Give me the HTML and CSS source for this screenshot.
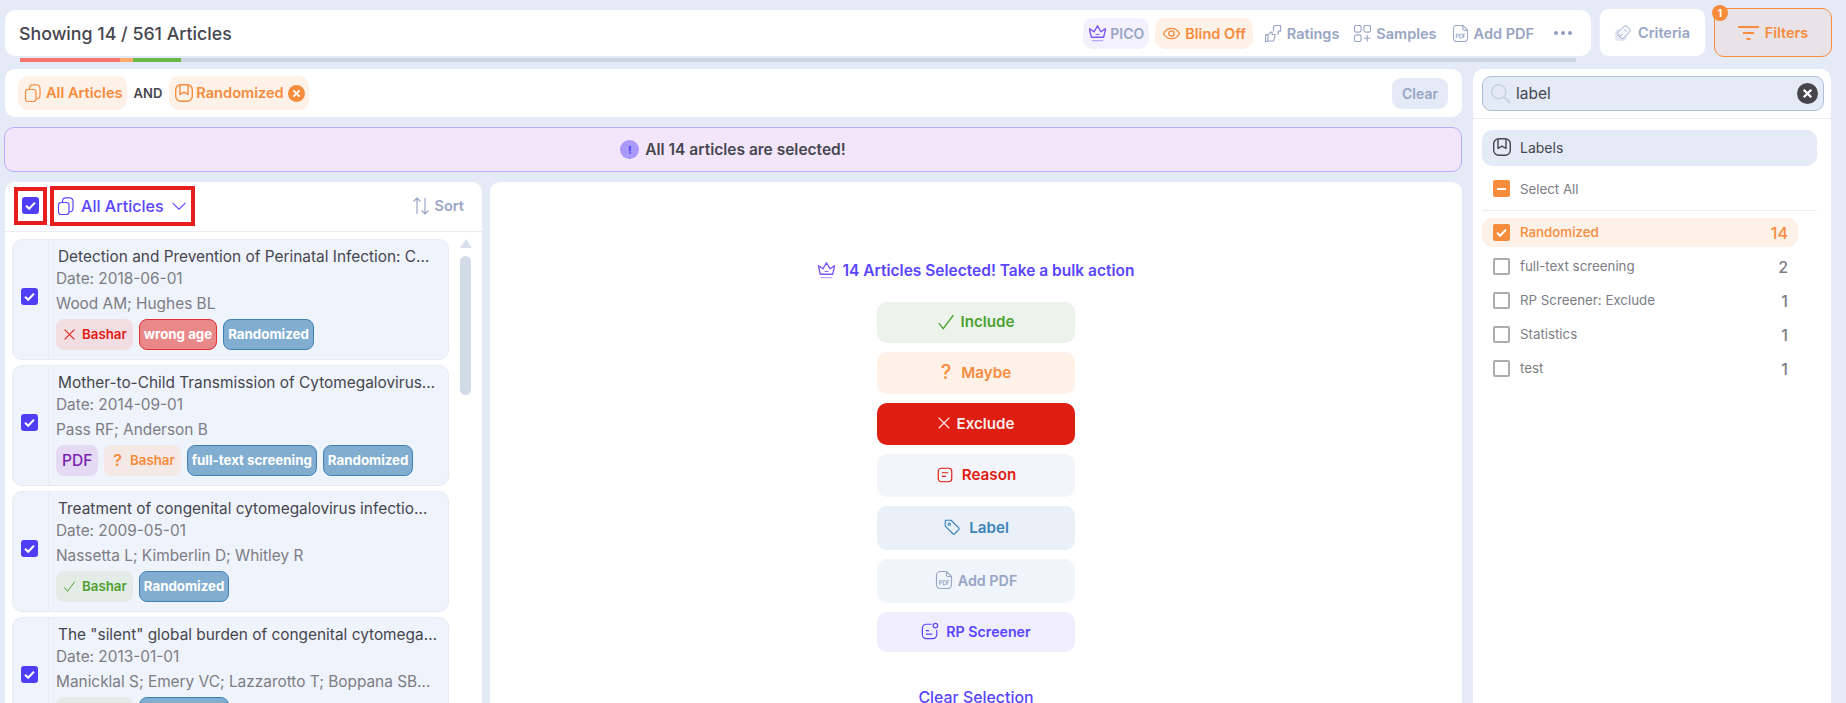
FILE: index.html
```html
<!DOCTYPE html>
<html lang="en">
<head>
<meta charset="utf-8">
<title>Articles</title>
<link rel="stylesheet" href="styles.css">
</head>
<body>
<svg class="defs" width="0" height="0" aria-hidden="true">
  <symbol id="i-copy" viewBox="0 0 20 20"><path d="M5 6.500h5.500A2.500 2.500 0 0 1 13 9v7a2.500 2.500 0 0 1-2.500 2.500H5A2.500 2.500 0 0 1 2.500 16V9A2.500 2.500 0 0 1 5 6.500Z" fill="none" stroke="currentColor" stroke-width="1.200"/><path d="M6.500 6.300V5a3 3 0 0 1 3-3.200h3.500A3.500 3.500 0 0 1 17 5v7.500a3.500 3.500 0 0 1-3.800 3.500" fill="none" stroke="currentColor" stroke-width="1.200"/></symbol>
  <symbol id="i-label" viewBox="0 0 20 20"><rect x="1.700" y="1.700" width="16.600" height="16.600" rx="5" fill="none" stroke="currentColor" stroke-width="1.400"/><path d="M6 2v9.500l4-2.300 4 2.300V2" fill="none" stroke="currentColor" stroke-width="1.400" stroke-linejoin="round"/></symbol>
  <symbol id="i-crown" viewBox="1 1 18 18"><path d="M3.500 14 1.300 4.800l5 3.400L10 1.800l3.700 6.400 5-3.400L16.500 14Z" fill="none" stroke="currentColor" stroke-width="1.400" stroke-linejoin="round"/><path d="M8 11h4" stroke="currentColor" stroke-width="1"/><path d="M4 17.500h12" stroke="#b9a7ff" stroke-width="1.300"/></symbol>
  <symbol id="i-eye" viewBox="1 1 18 18"><path d="M1.500 10C3.500 6.300 6.500 4.500 10 4.500s6.500 1.800 8.500 5.500c-2 3.700-5 5.500-8.500 5.500S3.500 13.700 1.500 10Z" fill="none" stroke="currentColor" stroke-width="1.400"/><circle cx="10" cy="10" r="2.800" fill="none" stroke="currentColor" stroke-width="1.400"/></symbol>
  <symbol id="i-thumbs" viewBox="1 1 18 18"><path d="M1.500 11.500h2.500v7H1.500ZM4 12l3-3.500h1.500v2.500h3v2l-1.500 5H4" fill="none" stroke="currentColor" stroke-width="1.200" stroke-linejoin="round"/><path d="M10 7.500V3l2-1.500h5.500v6H15v3h-1.500" fill="none" stroke="currentColor" stroke-width="1.200" stroke-linejoin="round"/></symbol>
  <symbol id="i-samples" viewBox="1 1 18 18"><rect x="1.500" y="1.500" width="7" height="7" rx="2" fill="none" stroke="currentColor" stroke-width="1.200"/><rect x="11.500" y="1.500" width="7" height="7" rx="2" fill="none" stroke="currentColor" stroke-width="1.200"/><rect x="1.500" y="11.500" width="7" height="7" rx="2" fill="none" stroke="currentColor" stroke-width="1.200"/><path d="M15 11.500v7M11.500 15h7" stroke="currentColor" stroke-width="1.200"/></symbol>
  <symbol id="i-pdf" viewBox="1 1 18 18"><path d="M6 1.500h6.500l5 5V15a3.500 3.500 0 0 1-3.500 3.500H6A3.500 3.500 0 0 1 2.500 15V5A3.500 3.500 0 0 1 6 1.500Z" fill="none" stroke="currentColor" stroke-width="1.100"/><path d="M12.500 1.500V5A1.500 1.500 0 0 0 14 6.500h3.500" fill="none" stroke="currentColor" stroke-width="1.100"/><path d="M5.500 15v-4.500H7a1 1 0 0 1 0 2.300H5.500M9.200 10.500V15h.8a2 2 0 0 0 0-4.500ZM13 15v-4.500h2.200M13 12.700h1.800" fill="none" stroke="currentColor" stroke-width=".9"/></symbol>
  <symbol id="i-criteria" viewBox="0 0 20 20"><rect x="1" y="7" width="12" height="12" rx="2.500" fill="#e5ebf6" stroke="#d5dbea" stroke-width="1"/><path d="M11 2.500a2 2 0 0 1 2.800 0l3.700 3.700a2 2 0 0 1 0 2.800l-7.500 7.500a2 2 0 0 1-2.800 0l-3.700-3.700a2 2 0 0 1 0-2.800Z" fill="#f6f8fc" stroke="currentColor" stroke-width="1.100"/><path d="M5 12.500l1.800 1.700 2.500-3M11 6l3 3" fill="none" stroke="currentColor" stroke-width="1"/></symbol>
  <symbol id="i-filter" viewBox="0 0 21 20"><path d="M0 4h21M5 10h11M8.500 16h4" stroke="currentColor" stroke-width="2.200" fill="none"/></symbol>
  <symbol id="i-sort" viewBox="0 0 20 20"><path d="M6 18V2M2.500 5.500 6 2l3.500 3.500M14 2v16M10.500 14.500 14 18l3.500-3.500" fill="none" stroke="currentColor" stroke-width="1.200"/></symbol>
  <symbol id="i-chev" viewBox="0 0 20 20"><path d="M2 6l8 8 8-8" fill="none" stroke="currentColor" stroke-width="1.300"/></symbol>
  <symbol id="i-x" viewBox="0 0 16 16"><path d="M2 2l12 12M14 2 2 14" fill="none" stroke="currentColor" stroke-width="1.300"/></symbol>
  <symbol id="i-xb" viewBox="0 0 16 16"><path d="M2.500 2.500l11 11M13.500 2.500l-11 11" fill="none" stroke="currentColor" stroke-width="3.400"/></symbol>
  <symbol id="i-ok" viewBox="0 0 16 16"><path d="M1.500 9 5.500 14 14.500 2" fill="none" stroke="currentColor" stroke-width="1.200"/></symbol>
  <symbol id="i-check" viewBox="0 0 16 16"><path d="M3.800 8.200 6.800 11l5.400-5.700" fill="none" stroke="#fff" stroke-width="2"/></symbol>
  <symbol id="i-reason" viewBox="0 0 20 20"><rect x="2.500" y="2.500" width="15" height="15" rx="3.500" fill="none" stroke="currentColor" stroke-width="1.300"/><path d="M6.500 7.500h7M6.500 11.500h4.500" stroke="currentColor" stroke-width="1.300"/></symbol>
  <symbol id="i-tag" viewBox="0 0 20 20"><path d="M3 2.500h6l8.500 8.500a1.500 1.500 0 0 1 0 2L13 17.500a1.500 1.500 0 0 1-2 0L2.500 9V3Z" fill="none" stroke="currentColor" stroke-width="1.300" stroke-linejoin="round"/><circle cx="7" cy="7" r="1.300" fill="none" stroke="currentColor" stroke-width="1.200"/></symbol>
  <symbol id="i-bot" viewBox="0 0 20 20"><path d="M12 2.500H6A4.500 4.500 0 0 0 1.500 7v7A4.500 4.500 0 0 0 6 18.500h7a4.500 4.500 0 0 0 4.500-4.500V9" fill="none" stroke="currentColor" stroke-width="1.300"/><circle cx="16" cy="4" r="2.500" fill="none" stroke="currentColor" stroke-width="1.300"/><path d="M5.500 9.500H9M5.500 13.500h7" stroke="currentColor" stroke-width="1.300"/></symbol>
  <symbol id="i-search" viewBox="0 0 24 24"><circle cx="10" cy="10" r="8" fill="none" stroke="currentColor" stroke-width="1.800"/><path d="M16 16l7 7" stroke="currentColor" stroke-width="2.200"/></symbol>
</svg>

<div class="app">
  <header class="top">
    <div class="top-main">
      <div class="bar">
        <h1 class="bar-title">Showing 14 / 561 Articles</h1>
        <nav class="bar-actions">
          <span class="act act-pico"><svg class="ic ic-crown"><use href="#i-crown"/></svg>PICO</span>
          <span class="act act-blind"><svg class="ic"><use href="#i-eye"/></svg>Blind Off</span>
          <span class="act act-plain"><svg class="ic"><use href="#i-thumbs"/></svg>Ratings</span>
          <span class="act act-plain"><svg class="ic"><use href="#i-samples"/></svg>Samples</span>
          <span class="act act-plain"><svg class="ic"><use href="#i-pdf"/></svg>Add PDF</span>
          <span class="dots"><i></i><i></i><i></i></span>
        </nav>
      </div>
      <div class="progress"><span class="p-red"></span><span class="p-orange"></span><span class="p-green"></span></div>
    </div>
    <button class="top-btn"><svg class="ic"><use href="#i-criteria"/></svg>Criteria</button>
    <button class="top-btn top-filters"><svg class="ic-filter"><use href="#i-filter"/></svg>Filters<span class="badge">1</span></button>
  </header>

  <div class="main">
    <div class="main-left">
      <div class="filter-row">
        <span class="f-chip f-chip-all"><svg class="ic"><use href="#i-copy"/></svg>All Articles</span>
        <span class="and">AND</span>
        <span class="f-chip f-chip-label"><svg class="ic"><use href="#i-label"/></svg>Randomized<span class="f-x"><svg class="xs"><use href="#i-xb"/></svg></span></span>
        <button class="clear">Clear</button>
      </div>

      <div class="banner"><span class="banner-ic">!</span>All 14 articles are selected!</div>

      <div class="panels">
        <section class="list">
          <div class="list-head">
            <span class="mark mark-box"><span class="cb"><svg><use href="#i-check"/></svg></span></span>
            <span class="mark mark-view"><svg class="ic"><use href="#i-copy"/></svg>All Articles<svg class="ic-chev"><use href="#i-chev"/></svg></span>
            <span class="sort"><svg class="ic"><use href="#i-sort"/></svg>Sort</span>
          </div>
          <div class="list-body">
            <div class="cards">
              <article class="card">
                <div class="card-check"><span class="cb"><svg><use href="#i-check"/></svg></span></div>
                <div class="card-body">
                  <h2 class="card-title">Detection and Prevention of Perinatal Infection: C…</h2>
                  <p class="card-line">Date: 2018-06-01</p>
                  <p class="card-line card-auth">Wood AM; Hughes BL</p>
                  <div class="chips">
                    <span class="chip c-ex"><svg class="cic"><use href="#i-x"/></svg>Bashar</span>
                    <span class="chip c-red">wrong age</span>
                    <span class="chip c-blue">Randomized</span>
                  </div>
                </div>
              </article>
              <article class="card">
                <div class="card-check"><span class="cb"><svg><use href="#i-check"/></svg></span></div>
                <div class="card-body">
                  <h2 class="card-title">Mother-to-Child Transmission of Cytomegalovirus…</h2>
                  <p class="card-line">Date: 2014-09-01</p>
                  <p class="card-line card-auth">Pass RF; Anderson B</p>
                  <div class="chips">
                    <span class="chip c-pdf">PDF</span>
                    <span class="chip c-maybe"><span class="q">?</span>Bashar</span>
                    <span class="chip c-blue">full-text screening</span>
                    <span class="chip c-blue">Randomized</span>
                  </div>
                </div>
              </article>
              <article class="card">
                <div class="card-check"><span class="cb"><svg><use href="#i-check"/></svg></span></div>
                <div class="card-body">
                  <h2 class="card-title">Treatment of congenital cytomegalovirus infectio…</h2>
                  <p class="card-line">Date: 2009-05-01</p>
                  <p class="card-line card-auth">Nassetta L; Kimberlin D; Whitley R</p>
                  <div class="chips">
                    <span class="chip c-inc"><svg class="cic"><use href="#i-ok"/></svg>Bashar</span>
                    <span class="chip c-blue">Randomized</span>
                  </div>
                </div>
              </article>
              <article class="card">
                <div class="card-check"><span class="cb"><svg><use href="#i-check"/></svg></span></div>
                <div class="card-body">
                  <h2 class="card-title">The "silent" global burden of congenital cytomega…</h2>
                  <p class="card-line">Date: 2013-01-01</p>
                  <p class="card-line card-auth">Manicklal S; Emery VC; Lazzarotto T; Boppana SB…</p>
                  <div class="chips">
                    <span class="chip c-inc"><svg class="cic"><use href="#i-ok"/></svg>Bashar</span>
                    <span class="chip c-blue">Randomized</span>
                  </div>
                </div>
              </article>
            </div>
            <div class="scroll"><span class="scroll-up"></span><span class="scroll-thumb"></span></div>
          </div>
        </section>

        <section class="bulk">
          <h2 class="bulk-title"><svg class="ic ic-crown"><use href="#i-crown"/></svg>14 Articles Selected! Take a bulk action</h2>
          <div class="bulk-btns">
            <button class="btn b-inc"><svg class="bic"><use href="#i-ok"/></svg>Include</button>
            <button class="btn b-maybe"><span class="bq">?</span>Maybe</button>
            <button class="btn b-ex"><svg class="bic"><use href="#i-x"/></svg>Exclude</button>
            <button class="btn b-reason"><svg class="bic"><use href="#i-reason"/></svg>Reason</button>
            <button class="btn b-label"><svg class="bic"><use href="#i-tag"/></svg>Label</button>
            <button class="btn b-pdf"><svg class="bic"><use href="#i-pdf"/></svg>Add PDF</button>
            <button class="btn b-rp"><svg class="bic"><use href="#i-bot"/></svg>RP Screener</button>
          </div>
          <a class="clear-sel">Clear Selection</a>
        </section>
      </div>
    </div>

    <aside class="side">
      <div class="side-search">
        <div class="search"><svg class="search-ic"><use href="#i-search"/></svg><span class="search-text">label</span><span class="search-x"><svg class="xs"><use href="#i-xb"/></svg></span></div>
      </div>
      <div class="side-body">
        <div class="labels-head"><svg class="ic"><use href="#i-label"/></svg>Labels</div>
        <div class="row row-all"><span class="cbx cbx-on"><i class="minus"></i></span><span class="row-name">Select All</span></div>
        <div class="rows">
          <div class="row row-on"><span class="cbx cbx-on"><svg><use href="#i-check"/></svg></span><span class="row-name">Randomized</span><span class="row-n">14</span></div>
          <div class="row"><span class="cbx"></span><span class="row-name">full-text screening</span><span class="row-n">2</span></div>
          <div class="row"><span class="cbx"></span><span class="row-name">RP Screener: Exclude</span><span class="row-n">1</span></div>
          <div class="row"><span class="cbx"></span><span class="row-name">Statistics</span><span class="row-n">1</span></div>
          <div class="row"><span class="cbx"></span><span class="row-name">test</span><span class="row-n">1</span></div>
        </div>
      </div>
    </aside>
  </div>
</div>
</body>
</html>
```

FILE: styles.css
```css
* { box-sizing: border-box; }
html, body { margin: 0; height: 703px; overflow: hidden; }
body { background: #e5ebf6; font-family: Inter, "Liberation Sans", sans-serif; color: #46464f; }
.defs { position: absolute; }
h1, h2, p { margin: 0; }
button { font-family: inherit; border: 0; cursor: pointer; }
.ic { width: 20px; height: 20px; flex: none; }

.app { height: 703px; padding: 8px 14px 0 5px; display: flex; flex-direction: column; }

/* top */
.top { display: flex; align-items: flex-start; gap: 8px; height: 61px; flex: none; }
.top-main { width: 1586px; padding-top: 2px; }
.bar { height: 46px; background: #fff; border-radius: 10px; display: flex; align-items: center; justify-content: space-between; padding: 0 19px 0 14px; }
.bar-title { font-size: 17.800px; font-weight: 500; color: #46464f; }
.bar-actions { display: flex; align-items: center; }
.act { display: flex; align-items: center; gap: 5px; height: 31px; border-radius: 10px; font-size: 14.500px; font-weight: 600; color: #98a5c4; white-space: nowrap; }
.act .ic { width: 17px; height: 17px; }
.act-plain { margin-left: 15px; }
.act-pico { background: #f3f1fe; padding: 0 5px 0 6px; gap: 4px; font-size: 14px; }
.act-pico .ic-crown { color: #7a55f5; }
.act-blind { background: #fdf1e8; color: #f68c3c; padding: 0 7px 0 8px; margin: 0 -3px 0 6px; }
.dots { display: flex; gap: 3px; margin-left: 20px; }
.dots i { width: 4px; height: 4px; border-radius: 50%; background: #8f9dbd; }
.progress { display: flex; height: 4px; margin: 2px 15px 0; background: #cdd5e3; }
.p-red { width: 100px; background: #f8736b; }
.p-orange { width: 13px; background: #fbab6b; }
.p-green { width: 48px; background: #69b84a; }
.top-btn { height: 49px; border-radius: 10px; background: #fff; display: flex; align-items: center; justify-content: center; gap: 6px; font-size: 14.500px; font-weight: 600; color: #98a5c4; width: 107px; border: 1px solid #e9edf6; position: relative; }
.top-btn .ic { width: 17px; height: 17px; }
.ic-filter { width: 21px; height: 20px; flex: none; }
.top-filters { width: 118px; background: #e9e3e8; border: 1px solid #f68c3c; color: #f68c3c; gap: 6px; }
.badge { position: absolute; left: -3px; top: -4px; width: 16px; height: 16px; border-radius: 50%; background: #f68c3c; color: #fff; font-size: 10px; font-weight: 700; display: flex; align-items: center; justify-content: center; }

/* main */
.main { flex: 1; min-height: 0; display: flex; gap: 11px; }
.main-left { width: 1457px; display: flex; flex-direction: column; min-height: 0; }
.filter-row { height: 48px; flex: none; background: #fff; border-radius: 10px; display: flex; align-items: center; padding: 0 14px 0 13px; }
.f-chip { height: 34px; display: flex; align-items: center; padding: 0 5px; background: #fdf1e8; border-radius: 10px; color: #f68c3c; font-size: 14.600px; font-weight: 600; gap: 3px; }
.f-chip-all { padding-right: 4px; }
.f-chip-label { gap: 2px; padding-right: 4px; }
.and { font-size: 13px; font-weight: 600; margin: 0 7px; color: #46464f; }
.f-x { width: 17px; height: 17px; border-radius: 50%; background: #f68c3c; color: #fff; display: flex; align-items: center; justify-content: center; margin-left: 2px; }
.xs { width: 9px; height: 9px; }
.clear { margin-left: auto; width: 56px; height: 31px; border-radius: 9px; background: #e5ebf6; color: #98a5c4; font-size: 14px; font-weight: 600; }

.banner { height: 45px; flex: none; margin: 10px 0 10px -1px; background: #f3e6fb; border: 1px solid #b9adf9; border-radius: 10px; display: flex; align-items: center; justify-content: center; gap: 6px; font-size: 15.500px; font-weight: 600; color: #46464f; }
.banner-ic { width: 19px; height: 19px; border-radius: 50%; background: #a899fb; color: #4f3ef5; font-size: 11px; font-weight: 700; display: flex; align-items: center; justify-content: center; }

.panels { flex: 1; min-height: 0; display: flex; gap: 8px; }

/* list */
.list { width: 477px; flex: none; background: #fff; border-radius: 10px 10px 0 0; display: flex; flex-direction: column; overflow: hidden; }
.list-head { height: 50px; flex: none; display: flex; align-items: center; border-bottom: 1px solid #e9ecf2; padding: 0 18px 2px 9px; }
.mark { border: 4px solid #e61e1e; display: flex; align-items: center; }
.mark-box { width: 33px; height: 38px; justify-content: center; }
.mark-view { height: 40px; width: 145px; margin-left: 3px; padding-left: 2px; gap: 5px; font-size: 16.100px; font-weight: 500; color: #5a45ff; white-space: nowrap; }
.ic-chev { width: 16px; height: 16px; margin-left: 2px; flex: none; }
.sort { margin-left: auto; display: flex; align-items: center; gap: 4px; color: #98a5c4; font-size: 14.500px; font-weight: 600; }

.cb { width: 17px; height: 17px; border-radius: 3px; background: #4f3ef5; display: block; flex: none; }
.cb svg { width: 17px; height: 17px; display: block; }

.list-body { flex: 1; min-height: 0; display: flex; overflow: hidden; padding: 7px 0 0 7px; }
.cards { width: 437px; flex: none; display: flex; flex-direction: column; gap: 5px; }
.card { height: 121px; flex: none; background: #eff3fb; border: 1px solid #e6ebf5; border-radius: 10px; display: flex; }
.card-check { width: 36px; flex: none; border-right: 1px solid #e6ebf5; display: flex; align-items: center; justify-content: center; padding: 0 3px 7px 0; }
.card-body { flex: 1; min-width: 0; padding: 6px 0 0 7px; }
.card-title { font-size: 15.400px; font-weight: 400; line-height: 22px; color: #46464f; padding-left: 2px; white-space: nowrap; }
.card-line { font-size: 15.400px; line-height: 22px; color: #7d7d85; white-space: nowrap; }
.card-auth { margin-top: 3px; }
.chips { display: flex; gap: 6px; margin-top: 4px; }
.chip { height: 31px; border-radius: 8px; display: flex; align-items: center; padding: 0 5px 1px; font-size: 13.300px; font-weight: 600; border: 1px solid transparent; white-space: nowrap; }
.cic { width: 13px; height: 13px; margin: 0 6px 0 1px; flex: none; }
.c-ex { background: #f2dde3; color: #e01c12; }
.c-red { background: #e98888; border-color: #e03030; color: #fff; font-weight: 700; padding: 0 4px 1px; }
.c-blue { background: #81aed0; border-color: #3d83b8; color: #fff; font-weight: 700; padding: 0 4px 1px; }
.c-pdf { background: #e5daf3; color: #7a1fb0; font-size: 15.500px; font-weight: 500; padding: 0 5px; }
.c-maybe { background: #f5e9e6; color: #f68c3c; }
.q { font-size: 16px; margin: 0 8px 0 3px; }
.c-inc { background: #e3ece6; color: #4da12f; }

.scroll { width: 13px; margin-left: 10px; flex: none; display: flex; flex-direction: column; align-items: center; }
.scroll-up { width: 0; height: 0; border-left: 6.500px solid transparent; border-right: 6.500px solid transparent; border-bottom: 9px solid #d9e0ec; }
.scroll-thumb { width: 11px; height: 139px; border-radius: 6px; background: #d4dbe8; margin-top: 8px; }

/* bulk */
.bulk { flex: 1; min-width: 0; background: #fff; border-radius: 10px 10px 0 0; display: flex; flex-direction: column; align-items: center; padding-top: 79px; overflow: hidden; }
.bulk-title { display: flex; align-items: center; gap: 8px; font-size: 15.500px; font-weight: 600; color: #5a45ff; height: 20px; white-space: nowrap; }
.bulk-title .ic { width: 17px; height: 17px; color: #7a55f5; }
.bulk-btns { display: flex; flex-direction: column; gap: 9px; margin-top: 22px; }
.btn { width: 198px; height: 42px; border-radius: 10px; display: flex; align-items: center; justify-content: center; gap: 5px; font-size: 15.200px; font-weight: 600; padding: 0 0 2px; }
.bic { width: 18px; height: 18px; flex: none; }
.b-inc { height: 41px; background: #ebf3ea; color: #4da12f; }
.bq { font-size: 20px; font-weight: 500; margin-right: 5px; }
.b-maybe { background: #fdf1e8; color: #f68c3c; }
.b-ex { background: #de1e10; color: #f1ecec; }
.b-ex .bic { width: 14px; height: 14px; }
.b-reason { height: 43px; background: #f3f5fa; color: #e01c12; gap: 8px; }
.b-label { height: 44px; background: #e9f0f8; color: #3d83b8; gap: 8px; }
.b-pdf { height: 44px; background: #f0f4fb; color: #98a5c4; font-size: 14.300px; }
.b-rp { height: 40px; background: #efedfe; color: #5a45ff; font-size: 14.200px; gap: 7px; }
.clear-sel { margin-top: 36px; font-size: 15.900px; font-weight: 500; color: #5a45ff; line-height: 20px; }

/* side */
.side { width: 358px; flex: none; background: #fff; border-radius: 10px 10px 0 0; }
.side-search { height: 50px; padding: 7px 7px 0 9px; border-bottom: 1px solid #e9ecf2; }
.search { height: 35px; background: #e5ebf6; border: 1px solid #b2bfdb; border-radius: 9px; display: flex; align-items: center; padding: 0 5px 0 7px; }
.search-ic { width: 21px; height: 21px; color: #c9d2e4; flex: none; }
.search-text { margin-left: 5px; font-size: 15.500px; color: #46464f; padding-bottom: 1px; }
.search-x { margin-left: auto; width: 21px; height: 21px; border-radius: 50%; background: #46464a; color: #fff; display: flex; align-items: center; justify-content: center; }
.search-x .xs { width: 11px; height: 11px; }
.side-body { padding: 11px 14px 0 9px; }
.labels-head { height: 36px; background: #e5ebf6; border-radius: 10px; display: flex; align-items: center; gap: 8px; padding: 0 10px 2px; font-size: 14px; font-weight: 400; color: #46464f; }
.row { height: 29px; display: flex; align-items: center; padding: 0 10px 0 11px; margin-top: 5px; width: 316px; font-size: 13.300px; color: #7d7d85; }
.row-all { margin-top: 8px; width: 335px; }
.rows { border-top: 1px solid #e9ecf2; margin-top: 7px; padding-top: 2px; }
.cbx { width: 17px; height: 17px; border-radius: 2px; border: 2px solid #adadb0; flex: none; display: flex; align-items: center; justify-content: center; }
.cbx svg { width: 17px; height: 17px; flex: none; }
.cbx-on { background: #f68c3c; border: 0; }
.minus { width: 9px; height: 2px; background: #fff; }
.row-name { margin-left: 10px; padding-bottom: 2px; }
.row-all .row-name { padding-bottom: 0; }
.row-n { margin-left: auto; font-size: 16px; color: #7d7d85; font-weight: 500; }
.row-on { background: #fdf1e8; border-radius: 10px; color: #f68c3c; font-weight: 500; }
.row-on .row-n { color: #f68c3c; }
```
